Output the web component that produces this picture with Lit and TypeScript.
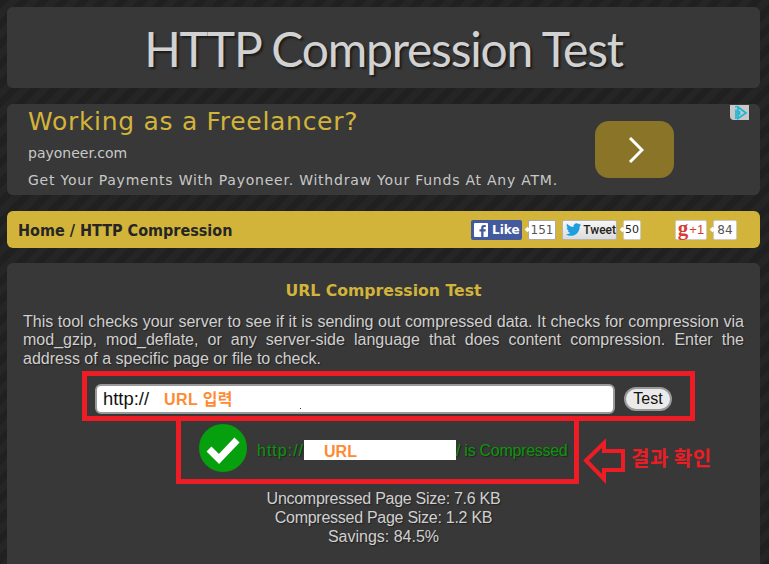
import { LitElement, html, css } from "lit";
import { customElement } from "lit/decorators.js";

@customElement("app-root")
export class AppRoot extends LitElement {
  static styles = css`
    :host { display: block; height: 564px; overflow: hidden; box-sizing: border-box; padding: 7px 9px 0 7px;
      background: repeating-linear-gradient(135deg, #202020 0 7px, #252525 7px 14px); }
    .panel { background: #383838; border-radius: 6px; box-shadow: 0 0 1px #2c2c2c; }
    .title { height: 81px; display: flex; align-items: center; justify-content: center; margin-bottom: 16px; }
    h1 { margin: 2px 0 0; font: 400 48px Lato, sans-serif; letter-spacing: -1.2px; color: #d2d2d2; text-shadow: 2px 2px 2px #1c1c1c; }
    .ad { height: 91px; position: relative; display: flex; margin-bottom: 16px; font-family: "DejaVu Sans", sans-serif; }
    .ad-text { flex: 1; padding: 0 0 0 21px; color: #c8c8c8; }
    .ad-head { color: #d2b43b; font-size: 25px; line-height: 34px; margin-top: 1px; letter-spacing: 0.7px; }
    .ad-site { font-size: 14px; line-height: 18px; margin-top: 5px; }
    .ad-desc { font-size: 14px; line-height: 18px; margin-top: 9px; letter-spacing: 0.77px; white-space: nowrap; }
    .go { width: 79px; height: 57px; border-radius: 14px; background: #897428; margin: 17px 86px 0 0; display: flex; align-items: center; justify-content: center; }
    .go svg { margin-left: 3px; }
    .adchoice { position: absolute; right: 11px; top: 1px; width: 19px; height: 15px; background: #c8c8c8; border-radius: 0 0 0 4px; }
    .nav { height: 37px; background: #d2b43b; border-radius: 6px; display: flex; align-items: center; margin-bottom: 15px; padding-left: 11px; }
    .crumb { font: 700 16px "DejaVu Sans", sans-serif; font-stretch: condensed; color: #262626; width: 453px; padding-top: 1px; }
    .social { display: flex; align-items: center; font-family: "Liberation Sans", sans-serif; }
    .btn { height: 20px; box-sizing: border-box; display: flex; align-items: center; border-radius: 2px; font-weight: 700; font-size: 12px; }
    .fb { width: 51px; background: #435a9e; color: #fff; padding-left: 3px; gap: 4px; font-family: "DejaVu Sans", sans-serif; }
    .tw { width: 55px; background: linear-gradient(#f6f6f6, #dcdcdc); border: 1px solid #b5b5b5; color: #222; gap: 2px; padding-left: 3px; margin-left: 6px; font: 500 12px Roboto, sans-serif; }
    .gp { width: 32px; background: #fff; border: 1px solid #ccc; color: #d73d32; justify-content: center; margin-left: 34px; font-weight: 400; font-size: 13px; gap: 1px; }
    .g { font: 700 21px "Liberation Serif", serif; line-height: 16px; margin-top: -3px; }
    .count { height: 20px; box-sizing: border-box; background: #fff; border: 1px solid #aaa; border-radius: 2px; margin-left: 6px; display: flex; align-items: center; justify-content: center; font: 12px "DejaVu Sans", sans-serif; color: #555; position: relative; }
    .count::before { content: ""; position: absolute; left: -4px; top: 6px; width: 5px; height: 5px; background: #fff; transform: rotate(45deg) scale(.8); }
    .c1 { width: 28px; }
    .c2 { width: 18px; color: #222; border-color: #ccc; font-size: 11px; }
    .c3 { width: 24px; border-color: #ccc; }
    .main { height: 320px; position: relative; padding: 18px 16px 0; box-sizing: border-box; font-family: "Liberation Sans", sans-serif; color: #d0d0d0; font-size: 16px; }
    h2 { margin: 0 0 12px; text-align: center; font: 700 15.7px "DejaVu Sans", sans-serif; line-height: 20px; color: #d2b43b; }
    p { margin: 0 0 16px; line-height: 18.4px; text-align: justify; text-shadow: 1px 1px 1px #222; }
    .form { display: flex; align-items: center; padding-left: 72px; height: 30px; margin-bottom: 10px; }
    .input { width: 520px; height: 30px; box-sizing: border-box; background: #fff; border: 2px solid #999; border-radius: 6px; color: #111; padding-left: 6px; line-height: 26px; font-size: 18.4px; position: relative; }
    .input::after { content: ""; position: absolute; left: 203px; top: 22px; width: 1px; height: 1px; background: #333; }
    .test { margin-left: 9px; width: 48px; height: 24px; box-sizing: border-box; background: #eaeaea; border: 2px solid #999; border-radius: 12px; color: #111; text-align: center; line-height: 20px; }
    .result { display: flex; align-items: center; padding-left: 176px; height: 48px; margin-bottom: 17px; color: #0a960a; text-shadow: 1px 1px 1px #222; letter-spacing: -0.28px; }
    .result svg { margin-right: 10px; flex: none; }
    .result > span { padding-top: 4px; }
    .proto { letter-spacing: 1px; }
    .blank { display: inline-block; width: 152px; height: 20px; background: #fff; vertical-align: -1.5px; text-align: left; text-shadow: none; color: #ff8a33; font-weight: 700; line-height: 24px; padding-left: 20px; box-sizing: border-box; letter-spacing: 0; }
    .stats { text-align: center; line-height: 19px; text-shadow: 1px 1px 1px #222; letter-spacing: -0.27px; }
    .sav { letter-spacing: 0; }
    .box { position: absolute; border: 5px solid #ee1c25; box-sizing: border-box; }
    .box1 { left: 75px; top: 108px; width: 613px; height: 50px; }
    .box2 { left: 169px; top: 153px; width: 403px; height: 68px; }
    .note { position: absolute; left: 624px; top: 180px; color: #ee1c25; font: 700 20px "Noto Sans CJK KR", sans-serif; letter-spacing: 0.5px; }
    .arrow { position: absolute; left: 576px; top: 175px; }
    .ko { color: #ff8a33; font: 700 16px "Liberation Sans", "Noto Sans CJK KR", sans-serif; margin-left: 15px; letter-spacing: 0.4px; }
  `;

  render() {
    return html`
      <div class="panel title"><h1>HTTP Compression Test</h1></div>
      <div class="panel ad">
        <div class="ad-text">
          <div class="ad-head">Working as a Freelancer?</div>
          <div class="ad-site">payoneer.com</div>
          <div class="ad-desc">Get Your Payments With Payoneer. Withdraw Your Funds At Any ATM.</div>
        </div>
        <div class="go"><svg width="16" height="26" viewBox="0 0 16 26"><path d="M2 1 L14 13 L2 25" fill="none" stroke="#fff" stroke-width="3"/></svg></div>
        <div class="adchoice"><svg width="19" height="15" viewBox="0 0 19 15"><path d="M8 2 L16 8 L8 13.500 Z" fill="none" stroke="#1ab7d6" stroke-width="1.700"/><path d="M6 1 V2.500 M6 4.500 V14 M9.500 6 V10" stroke="#1ab7d6" stroke-width="1.700"/></svg></div>
      </div>
      <div class="nav">
        <div class="crumb">Home / HTTP Compression</div>
        <div class="social">
          <div class="btn fb"><svg width="14" height="14" viewBox="0 0 14 14"><rect width="14" height="14" rx="1" fill="#fff"/><path d="M9.500 14V8.500h2l.3-2.200H9.500V5c0-.7.3-1 1-1h1.300V2H10C8 2 7.200 3.200 7.200 4.800v1.500H5.500v2.200h1.700V14z" fill="#435a9e"/></svg>Like</div>
          <div class="count c1">151</div>
          <div class="btn tw"><svg width="16" height="13" viewBox="0 0 24 20"><path d="M24 2.400c-.9.4-1.800.7-2.800.8 1-.6 1.800-1.600 2.200-2.700-1 .6-2 1-3.100 1.200C19.300.7 18 0 16.600 0c-2.700 0-4.900 2.200-4.900 4.900 0 .4 0 .8.100 1.100C7.700 5.800 4.100 3.900 1.700.9 1.300 1.600 1 2.500 1 3.400c0 1.700.9 3.200 2.200 4.100-.8 0-1.600-.2-2.200-.6v.1c0 2.400 1.700 4.400 3.900 4.800-.4.100-.8.200-1.300.2-.3 0-.6 0-.9-.1.6 2 2.400 3.400 4.600 3.400-1.700 1.300-3.800 2.100-6.100 2.100-.4 0-.8 0-1.200-.1C2.200 19.300 4.800 20 7.500 20c9.100 0 14-7.500 14-14v-.6c1-.7 1.800-1.600 2.500-3z" fill="#1c9fdc"/></svg>Tweet</div>
          <div class="count c2">50</div>
          <div class="btn gp"><span class="g">g</span>+1</div>
          <div class="count c3">84</div>
        </div>
      </div>
      <div class="panel main">
        <h2>URL Compression Test</h2>
        <p>This tool checks your server to see if it is sending out compressed data. It checks for compression via mod_gzip, mod_deflate, or any server-side language that does content compression. Enter the address of a specific page or file to check.</p>
        <div class="form">
          <div class="input">http://<span class="ko">URL 입력</span></div>
          <div class="test">Test</div>
        </div>
        <div class="result">
          <svg width="48" height="48" viewBox="0 0 48 48"><circle cx="24" cy="24" r="24" fill="#06a00f"/><path d="M10 25 L20 35 L38 16" fill="none" stroke="#fff" stroke-width="7"/></svg>
          <span><span class="proto">http://</span><span class="blank">URL</span>/ is Compressed</span>
        </div>
        <div class="stats">Uncompressed Page Size: 7.6 KB<br>Compressed Page Size: 1.2 KB<br><span class="sav">Savings: 84.5%</span></div>
        <div class="box box1"></div>
        <div class="box box2"></div>
        <svg class="arrow" width="46" height="46" viewBox="0 0 46 46"><path d="M21 5 V13 H40 V32 H21 V41 L3 22.500 Z" fill="none" stroke="#ee1c25" stroke-width="4"/></svg>
        <div class="note">결과 확인</div>
      </div>
    `;
  }
}
